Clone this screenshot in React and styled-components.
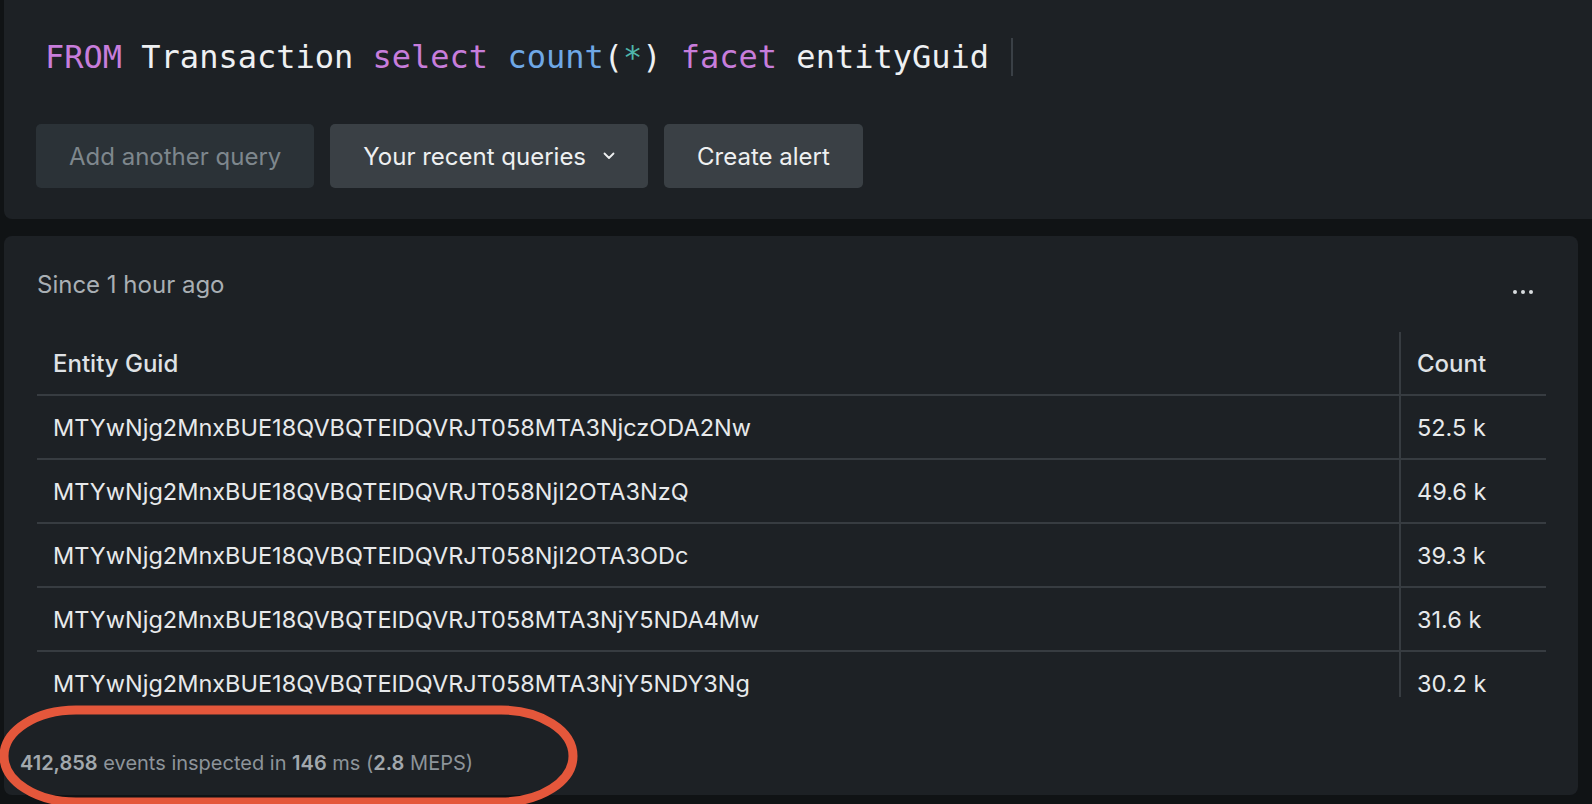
import React from "react";
import styled, { createGlobalStyle } from "styled-components";

const Global = createGlobalStyle`
  html, body { margin: 0; padding: 0; background: #101315; }
  body { font-family: Inter, "Noto Sans", sans-serif; overflow: hidden; }
  * { box-sizing: border-box; }
`;

const Page = styled.div`
  position: relative;
  width: 1592px;
  height: 804px;
  padding-left: 4px;
  display: flex;
  flex-direction: column;
  gap: 17px;
  overflow: hidden;
`;

const QueryPanel = styled.section`
  background: #1d2125;
  border-radius: 0 0 0 8px;
  height: 219px;
  padding: 37px 0 0 32px;
  display: flex;
  flex-direction: column;
  gap: 47px;
`;

const QueryLine = styled.div`
  font-family: "DejaVu Sans Mono", "Liberation Mono", monospace;
  font-size: 32px;
  line-height: 40px;
  height: 40px;
  padding-left: 9px;
  color: #eef0f2;
  white-space: pre;
  display: flex;
  align-items: center;
`;

const Tok = styled.span`
  color: ${(p) => p.$c || "#eef0f2"};
`;

const Cursor = styled.span`
  display: inline-block;
  width: 2px;
  height: 38px;
  margin-left: 22px;
  background: #3a4046;
`;

const ButtonRow = styled.div`
  display: flex;
  gap: 16px;
`;

const Button = styled.button`
  height: 64px;
  padding: 0 33px;
  border: none;
  border-radius: 5px;
  background: ${(p) => (p.$disabled ? "#2b3237" : "#3a4045")};
  color: ${(p) => (p.$disabled ? "#7e878d" : "#eef0f1")};
  font-family: Inter, sans-serif;
  font-size: 24px;
  display: flex;
  align-items: center;
  gap: 17px;
  cursor: pointer;
`;

const ResultPanel = styled.section`
  background: #1d2125;
  border-radius: 8px;
  width: 1574px;
  height: 559px;
  padding: 32px 32px 0 16px;
  display: flex;
  flex-direction: column;
`;

const Content = styled.div`
  padding-left: 17px;
  display: flex;
  flex-direction: column;
  gap: 32px;
`;

const TitleRow = styled.div`
  display: flex;
  align-items: center;
  justify-content: space-between;
  height: 32px;
`;

const Title = styled.div`
  font-size: 24px;
  color: #a9afb4;
`;

const MoreButton = styled.button`
  background: none;
  border: none;
  padding: 0;
  margin: 16px 13px 0 0;
  display: flex;
  gap: 4px;
`;

const Dot = styled.span`
  width: 4px;
  height: 4px;
  border-radius: 50%;
  background: #d8dcdf;
`;

const TableWrap = styled.div`
  height: 365px;
  overflow: hidden;
`;

const Table = styled.div`
  display: grid;
  grid-template-columns: 1362px 1fr;
`;

const Cell = styled.div`
  height: 64px;
  display: flex;
  align-items: center;
  padding-left: 16px;
  border-bottom: 2px solid #373c41;
  border-left: ${(p) => (p.$right ? "2px solid #373c41" : "none")};
  font-size: ${(p) => (p.$head ? 24 : 23.5)}px;
  font-weight: ${(p) => (p.$head ? 500 : 400)};
  color: ${(p) => (p.$head ? "#dfe2e5" : "#e7e9eb")};
  white-space: nowrap;
`;

const Footer = styled.div`
  margin-top: 54px;
  font-size: 20px;
  line-height: 24px;
  color: #8d949a;
  b { font-weight: 600; color: #a2a8ad; }
`;

const Annotation = styled.svg`
  position: absolute;
  left: 0;
  top: 700px;
  pointer-events: none;
`;

const rows = [
  ["MTYwNjg2MnxBUE18QVBQTEIDQVRJT058MTA3NjczODA2Nw", "52.5 k"],
  ["MTYwNjg2MnxBUE18QVBQTEIDQVRJT058NjI2OTA3NzQ", "49.6 k"],
  ["MTYwNjg2MnxBUE18QVBQTEIDQVRJT058NjI2OTA3ODc", "39.3 k"],
  ["MTYwNjg2MnxBUE18QVBQTEIDQVRJT058MTA3NjY5NDA4Mw", "31.6 k"],
  ["MTYwNjg2MnxBUE18QVBQTEIDQVRJT058MTA3NjY5NDY3Ng", "30.2 k"],
];

const Chevron = () => (
  <svg width="12" height="8" viewBox="0 0 12 8" fill="none">
    <path d="M1.5 1.5l4.5 4.5 4.5-4.5" stroke="#eef0f1" strokeWidth="1.8" strokeLinecap="round" strokeLinejoin="round" />
  </svg>
);

export default function App() {
  return (
    <>
      <Global />
      <Page>
        <QueryPanel>
          <QueryLine>
            <Tok $c="#c77ddb">FROM</Tok>
            <Tok> Transaction </Tok>
            <Tok $c="#c77ddb">select</Tok>
            <Tok> </Tok>
            <Tok $c="#6fa8e6">count</Tok>
            <Tok>(</Tok>
            <Tok $c="#4fb6ab">*</Tok>
            <Tok>) </Tok>
            <Tok $c="#c77ddb">facet</Tok>
            <Tok> entityGuid</Tok>
            <Cursor />
          </QueryLine>
          <ButtonRow>
            <Button $disabled>Add another query</Button>
            <Button>
              Your recent queries <Chevron />
            </Button>
            <Button>Create alert</Button>
          </ButtonRow>
        </QueryPanel>
        <ResultPanel>
          <Content>
            <TitleRow>
              <Title>Since 1 hour ago</Title>
              <MoreButton aria-label="more">
                <Dot />
                <Dot />
                <Dot />
              </MoreButton>
            </TitleRow>
            <TableWrap>
              <Table>
                <Cell $head>Entity Guid</Cell>
                <Cell $head $right>Count</Cell>
                {rows.map(([g, c]) => (
                  <React.Fragment key={g}>
                    <Cell>{g}</Cell>
                    <Cell $right>{c}</Cell>
                  </React.Fragment>
                ))}
              </Table>
            </TableWrap>
          </Content>
          <Footer>
            <b>412,858</b> events inspected in <b>146</b> ms (<b>2.8</b> MEPS)
          </Footer>
        </ResultPanel>
        <Annotation width="600" height="110" viewBox="0 700 600 110">
          <rect x="4" y="710" width="569" height="92" rx="72" ry="47" fill="none" stroke="#e4573b" strokeWidth="9" />
        </Annotation>
      </Page>
    </>
  );
}
